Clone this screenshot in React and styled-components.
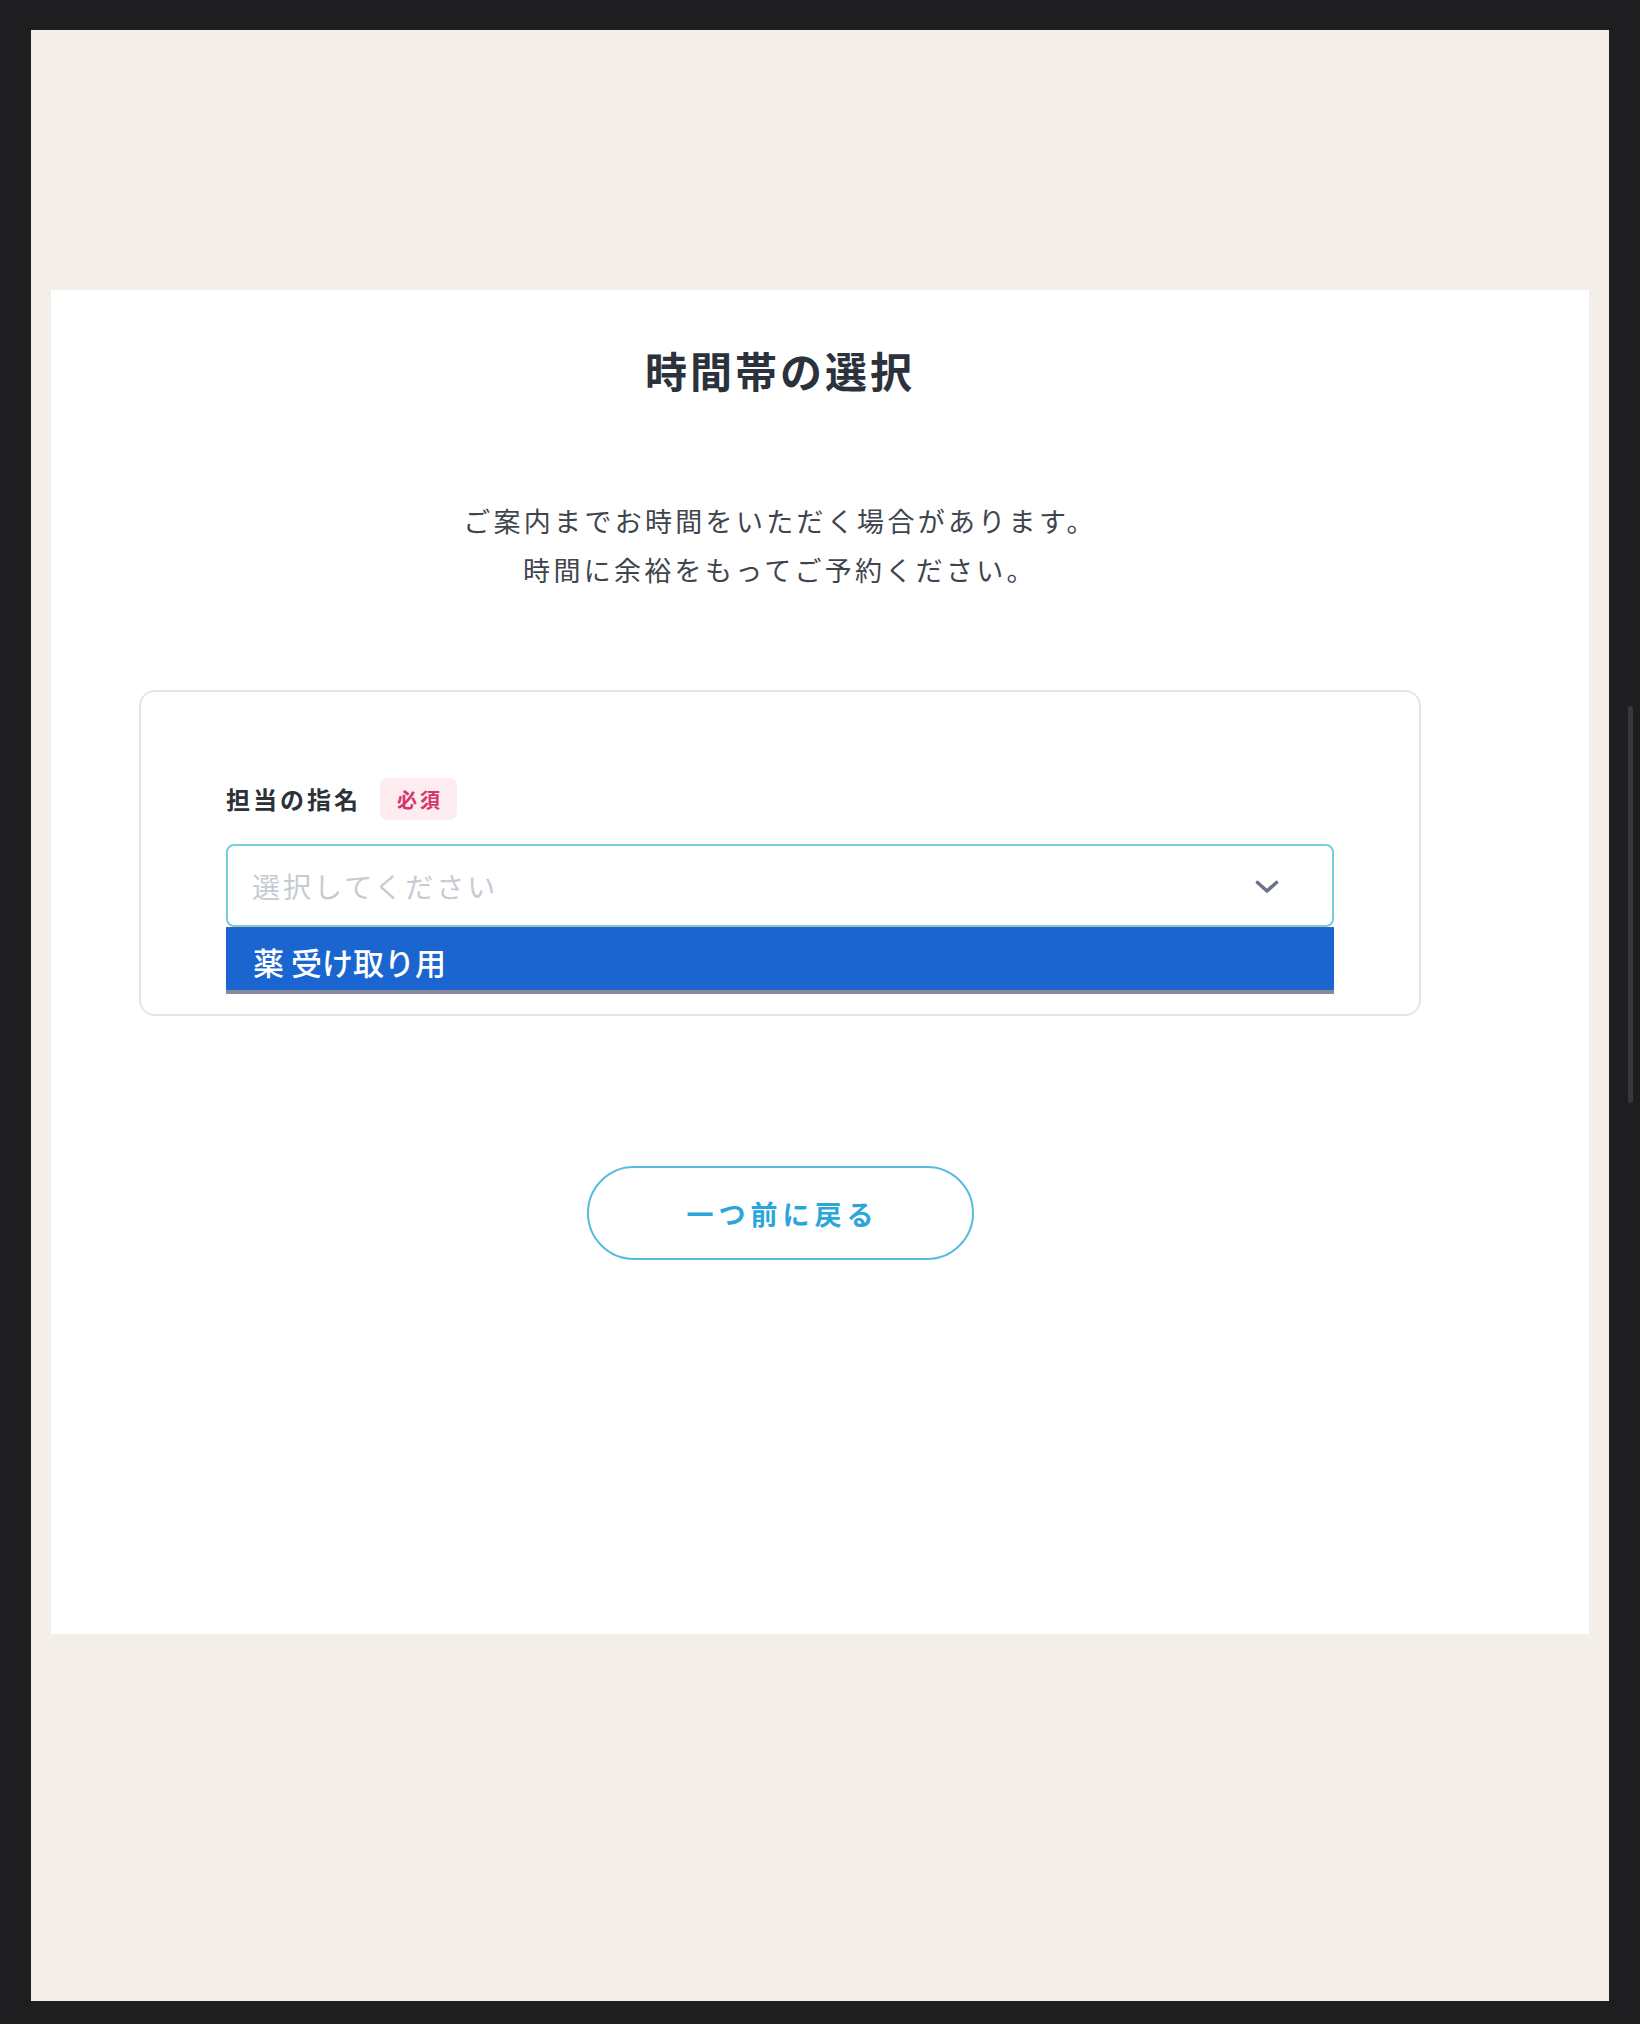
import React from "react";
import styled, { createGlobalStyle } from "styled-components";

const GlobalStyle = createGlobalStyle`
  html, body {
    margin: 0;
    padding: 0;
    background: #1e1e20;
  }
  body {
    font-family: "Noto Sans CJK JP", "Noto Sans", sans-serif;
    -webkit-font-smoothing: antialiased;
  }
  * { box-sizing: border-box; }
`;

const Screen = styled.div`
  position: relative;
  min-height: 2024px;
  padding: 30px 31px 23px;
  background: #1e1e20;
`;

const ScrollThumb = styled.div`
  position: absolute;
  left: 1628px;
  top: 706px;
  width: 5px;
  height: 397px;
  border-radius: 3px;
  background: #38383b;
`;

const Frame = styled.div`
  height: 1971px;
  padding: 260px 20px 0;
  background: #f4eee8;
`;

const Card = styled.main`
  height: 1344px;
  padding: 48px 168px 0 88px;
  background: #ffffff;
  display: flex;
  flex-direction: column;
  align-items: center;
`;

const Title = styled.h1`
  margin: 0;
  font-size: 42px;
  line-height: 63px;
  font-weight: 700;
  letter-spacing: 3px;
  color: #2b323c;
  text-align: center;
`;

const Lead = styled.p`
  margin: 95px 0 0;
  font-size: 27px;
  line-height: 49px;
  font-weight: 400;
  letter-spacing: 3.3px;
  color: #40454d;
  text-align: center;
`;

const FormBox = styled.section`
  margin-top: 96px;
  width: 1282px;
  padding: 86px 85px 87px;
  border: 2px solid #e5e5e5;
  border-radius: 16px;
  background: #fff;
`;

const LabelRow = styled.div`
  display: flex;
  align-items: center;
  gap: 19px;
`;

const Label = styled.span`
  font-size: 24px;
  line-height: 42px;
  font-weight: 700;
  letter-spacing: 3px;
  color: #2d3138;
`;

const Badge = styled.span`
  display: inline-flex;
  align-items: center;
  height: 42px;
  padding: 0 14px 0 17px;
  border-radius: 8px;
  background: #fdecf0;
  color: #d8336a;
  font-size: 20px;
  font-weight: 700;
  letter-spacing: 3px;
`;

const Select = styled.div`
  position: relative;
  margin-top: 24px;
  height: 83px;
  padding: 0 53px 0 24px;
  border: 2px solid #76cddc;
  border-radius: 8px;
  display: flex;
  align-items: center;
  justify-content: space-between;
  background: #fff;
`;

const Placeholder = styled.span`
  font-size: 28px;
  letter-spacing: 3px;
  color: #c6cbd3;
`;

const Chevron = styled.svg`
  width: 24px;
  height: 14px;
  flex: none;
  margin-top: 2px;
`;

const Menu = styled.ul`
  position: absolute;
  top: calc(100% + 2px);
  left: -2px;
  right: -2px;
  margin: 0;
  padding: 0;
  list-style: none;
  border-top: 1px solid #3f63a8;
  border-bottom: 4px solid #868a9b;
  background: #1b65d1;
`;

const Option = styled.li`
  height: 62px;
  padding: 5px 0 0 27px;
  display: flex;
  align-items: center;
  font-size: 31px;
  font-weight: 500;
  color: #ffffff;
`;

const BackButton = styled.button`
  margin-top: 150px;
  width: 387px;
  height: 94px;
  border: 2px solid #55bbdf;
  border-radius: 47px;
  background: #ffffff;
  font-family: "Noto Sans CJK JP", "Noto Sans", sans-serif;
  font-size: 27px;
  font-weight: 700;
  letter-spacing: 5px;
  padding: 0 0 0 5px;
  color: #2aa6da;
  cursor: pointer;
`;

export default function App() {
  return (
    <>
      <GlobalStyle />
      <Screen>
        <Frame>
          <Card>
            <Title>時間帯の選択</Title>
            <Lead>
              ご案内までお時間をいただく場合があります。
              <br />
              時間に余裕をもってご予約ください。
            </Lead>
            <FormBox>
              <LabelRow>
                <Label>担当の指名</Label>
                <Badge>必須</Badge>
              </LabelRow>
              <Select>
                <Placeholder>選択してください</Placeholder>
                <Chevron viewBox="0 0 24 14" fill="none">
                  <polyline
                    points="2.5,2.5 12,11 21.5,2.5"
                    stroke="#6d7487"
                    strokeWidth="3.6"
                    strokeLinecap="round"
                    strokeLinejoin="round"
                  />
                </Chevron>
                <Menu>
                  <Option>薬 受け取り用</Option>
                </Menu>
              </Select>
            </FormBox>
            <BackButton>一つ前に戻る</BackButton>
          </Card>
        </Frame>
        <ScrollThumb />
      </Screen>
    </>
  );
}
